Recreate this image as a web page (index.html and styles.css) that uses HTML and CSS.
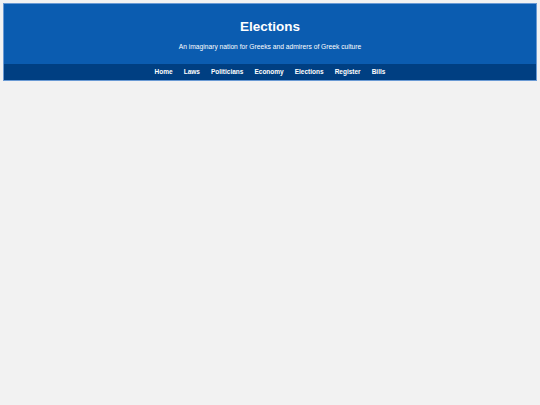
FILE: index.html
```html
<!DOCTYPE html>
<html lang="en">
<head>
    <meta charset="UTF-8">
    <title>Elections</title>
    <link rel="stylesheet" href="styles.css">
</head>
<body>
    <div class="header">
        <div class="banner">
            <h1>Elections</h1>
            <p>An imaginary nation for Greeks and admirers of Greek culture</p>
        </div>
        <ul class="nav">
            <li><a href="#">Home</a></li>
            <li><a href="#">Laws</a></li>
            <li><a href="#">Politicians</a></li>
            <li><a href="#">Economy</a></li>
            <li><a href="#">Elections</a></li>
            <li><a href="#">Register</a></li>
            <li><a href="#">Bills</a></li>
        </ul>
    </div>
</body>
</html>
```

FILE: styles.css
```css
body{
    margin: 0;
    padding: 3px;
    background-color: #f2f2f2;
    font-family: "Liberation Sans", Arial, sans-serif;
}

.header{
    border: 1px solid #6a9ad4;
    background-color: #0b5cb0;
    color: #fff;
}

.banner{
    text-align: center;
    padding: 14px 0 12px;
}

.banner h1{
    margin: 0;
    font-size: 13.5px;
    line-height: 18px;
}

.banner p{
    margin: 6px 0 0;
    font-size: 6.7px;
    line-height: 10px;
}

.nav{
    list-style: none;
    margin: 0;
    padding: 0;
    height: 16px;
    background-color: #003f82;
    display: flex;
    justify-content: center;
    gap: 11px;
}

.nav li{
    font-size: 6.5px;
    line-height: 16px;
}

.nav a{
    color: #fff;
    text-decoration: none;
    font-weight: bold;
}
```
